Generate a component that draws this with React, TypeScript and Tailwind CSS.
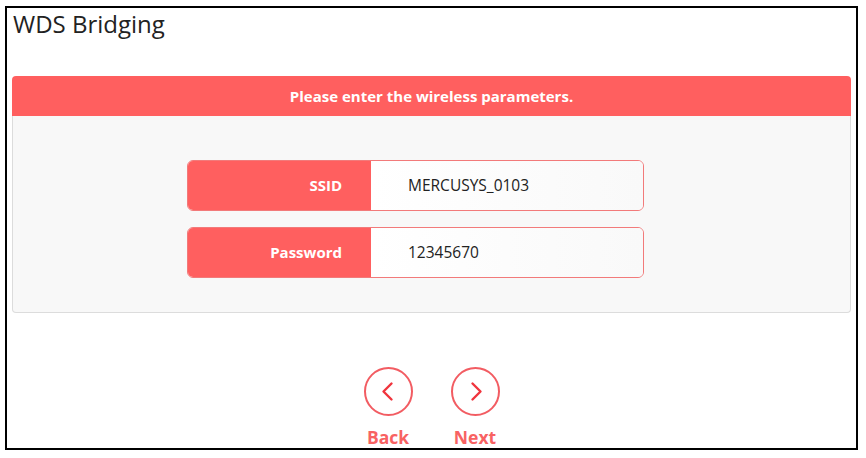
import React from "react";

function Chevron({ dir }: { dir: "left" | "right" }) {
  return (
    <svg width="49" height="49" viewBox="0 0 49 49" fill="none">
      <circle cx="24.5" cy="24.5" r="23.5" stroke="#f25c62" strokeWidth="2" />
      {dir === "left" ? (
        <path d="M27.5 16.5 L19.5 24.5 L27.5 32.5" stroke="#f0343d" strokeWidth="2.4" strokeLinecap="round" strokeLinejoin="round" />
      ) : (
        <path d="M21.5 16.5 L29.5 24.5 L21.5 32.5" stroke="#f0343d" strokeWidth="2.4" strokeLinecap="round" strokeLinejoin="round" />
      )}
    </svg>
  );
}

function Row({ label, value }: { label: string; value: string }) {
  return (
    <div className="flex h-[51px] w-[457px] overflow-hidden rounded-[6px] border border-[#f27a7a]">
      <div className="flex w-[183px] items-center justify-end bg-[#ff5f5f] pr-[29px] text-[15px] font-bold text-white">
        {label}
      </div>
      <div className="flex flex-1 items-center bg-gradient-to-r from-white to-[#f9f9f9] pl-[37px] text-[15.5px] text-[#222]">
        {value}
      </div>
    </div>
  );
}

export default function App() {
  return (
    <div className="h-[458px] w-[866px] bg-white p-[5px] pt-[6px] font-['Open_Sans',_sans-serif]">
      <div className="h-[444px] w-[853px] border-2 border-black px-[5px]">
        <div className="pl-[1px] pt-[0px] text-[24px] leading-[31px] text-[#222]">WDS Bridging</div>
        <div className="mt-[37px] flex h-[40px] items-center justify-center rounded-t-[4px] bg-[#ff5f5f] text-[15px] font-bold text-white">
          Please enter the wireless parameters.
        </div>
        <div className="flex h-[197px] flex-col items-center gap-[16px] rounded-b-[4px] border border-t-0 border-[#dcdcdc] bg-[#f8f8f8] pr-[32px] pt-[44px]">
          <Row label="SSID" value="MERCUSYS_0103" />
          <Row label="Password" value="12345670" />
        </div>
        <div className="mt-[54px] flex justify-center gap-[38px]">
          <div className="flex flex-col items-center">
            <Chevron dir="left" />
            <div className="mt-[11px] text-[17.5px] font-bold leading-[20px] text-[#f86262]">Back</div>
          </div>
          <div className="flex flex-col items-center">
            <Chevron dir="right" />
            <div className="mt-[11px] text-[17.5px] font-bold leading-[20px] text-[#f86262]">Next</div>
          </div>
        </div>
      </div>
    </div>
  );
}
